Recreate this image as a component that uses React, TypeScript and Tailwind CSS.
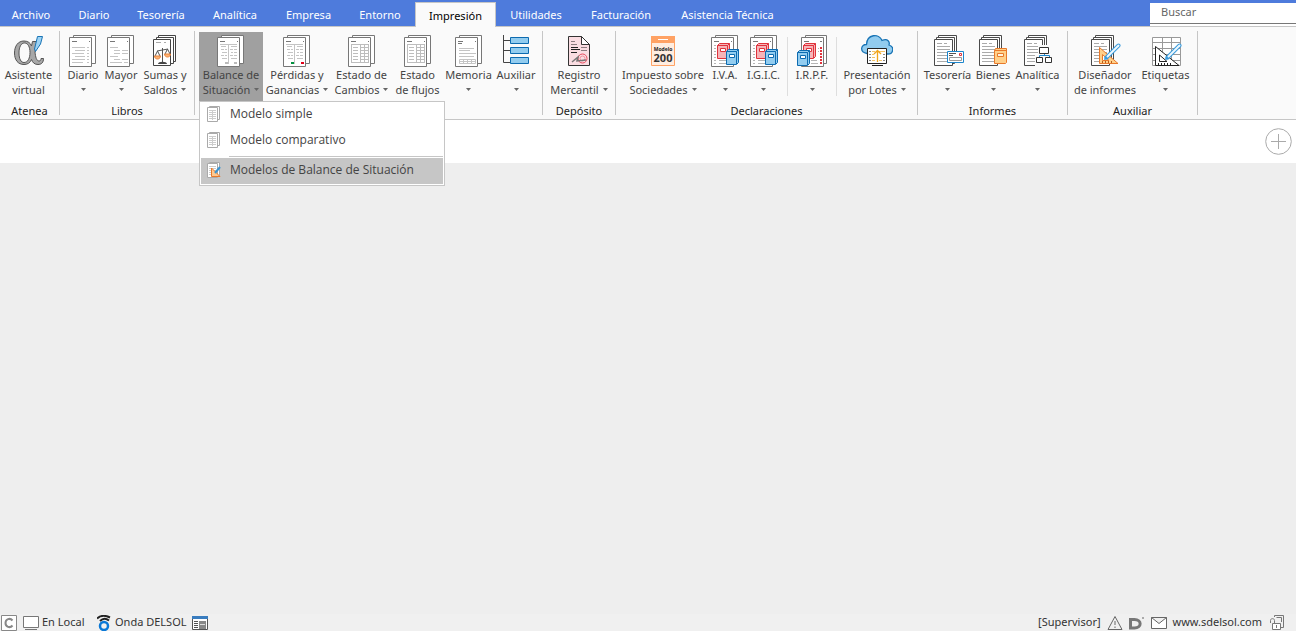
import type { ReactNode } from "react";

const tabs = [
  { label: "Diario", width: "w-[60px]" },
  { label: "Tesorería", width: "w-[74px]" },
  { label: "Analítica", width: "w-[74px]" },
  { label: "Empresa", width: "w-[73px]" },
  { label: "Entorno", width: "w-[70px]" },
  { label: "Impresión", width: "w-[81px]", active: true },
  { label: "Utilidades", width: "w-[80px]" },
  { label: "Facturación", width: "w-[90px]" },
  { label: "Asistencia Técnica", width: "w-[123px]" },
];

/* ---------- icons ---------- */

const Icon = ({ children }: { children: ReactNode }) => (
  <svg width="32" height="33" viewBox="0 0 32 33" fill="none" className="shrink-0" aria-hidden="true">
    {children}
  </svg>
);

// two stacked sheets
const Sheets = ({ children }: { children?: ReactNode }) => (
  <g transform="translate(-1 0)">
    <path d="M7.5 1.5H29.5V29.5H7.5Z" fill="#fff" stroke="#777" />
    <path d="M3.5 3.5H25.5V32.5H3.5Z" fill="#fff" stroke="#777" />
    <path d="M6 7.5H11M23 7.5H24" stroke="#777" />
    {children}
  </g>
);

// three stacked sheets, darker
const DarkSheets = () => (
  <>
    <path d="M6.5 1.5H24.5V27.5H6.5Z" fill="#fff" stroke="#4a4a4a" />
    <path d="M4.5 3.5H22.5V29.5H4.5Z" fill="#fff" stroke="#4a4a4a" />
    <path d="M2.5 5.5H20.5V31.5H2.5Z" fill="#fff" stroke="#4a4a4a" />
    <path d="M5 9.5H10M12 9.5H15" stroke="#aaa" />
    <path d="M5 12.5H18M5 15.5H18M5 18.5H18M5 21.5H18M5 24.5H18M5 27.5H18" stroke="#aaa" />
  </>
);

const AlphaIcon = () => (
  <Icon>
    <path
      fillRule="evenodd"
      d="M11 7C15 7 17.500 9 18.500 12L19.500 7.500H24.500L22 18C22.500 23 23.500 27 26 27C27.500 27 28 26 28 24.500H30.500C30.500 28.500 28.500 30.500 25 30.500C21.500 30.500 19.500 28.500 18.500 25.500C17 29 14.500 30.500 11 30.500C5 30.500 1.500 26 1.500 19C1.500 12 5 7 11 7ZM11.500 9C8 9 6 13 6 19C6 25 8 28.500 11 28.500C15 28.500 17 24 17 18.500C17 13 15 9 11.500 9Z"
      fill="#a8a8a8"
      stroke="#555"
    />
    <path d="M24.500 2.500H29.500L27.500 10L22.500 17.500L21.500 15Z" fill="#9dd3f4" stroke="#1974b5" />
  </Icon>
);

const DiarioIcon = () => (
  <Icon>
    <Sheets>
      <path d="M6 13.5H19M21 13.5H23M9 16.5H19M21 16.5H23M6 19.5H18M21 19.5H23M9 22.5H19M21 22.5H23M6 25.5H19M21 25.5H23M6 28.5H17M21 28.5H23" stroke="#c4c4c4" />
    </Sheets>
  </Icon>
);

const MayorIcon = () => (
  <Icon>
    <Sheets>
      <path d="M6 13.5H14M10 16.5H16M18 16.5H24M10 19.5H16M18 19.5H24M6 22.5H14M10 25.5H16M18 25.5H24M6 28.5H18M20 28.5H24" stroke="#c4c4c4" />
    </Sheets>
  </Icon>
);

const SumasIcon = () => (
  <Icon>
    <g transform="translate(-1 0)">
      <path d="M10.5 1.5H27.5V27.5H10.5Z" fill="#fff" stroke="#444" />
      <path d="M8.5 3.5H25.5V29.5H8.5Z" fill="#fff" stroke="#444" />
      <path d="M5.5 5.5H22.5V31.5H5.5Z" fill="#fff" stroke="#444" />
      <path d="M8 8.5H13M16 8.5H18" stroke="#aaa" />
      <path d="M14.5 14V28M9 17L20 15M9.5 17L7 22M9.500 17L12 22M19.500 15L17 20M19.500 15L22 20" stroke="#555" />
      <path d="M10 30C10 27 19 27 19 30Z" fill="#444" />
      <path d="M6.500 22H12.500C12.500 26 6.500 26 6.500 22ZM16.500 20H22.500C22.500 24 16.500 24 16.500 20Z" fill="#ffb273" stroke="#e8833a" />
    </g>
  </Icon>
);

const balanceLines =
  "M14.5 10V30M7 12.5H12M17 12.5H23M7 15.5H10M11 15.5H13M16 15.5H19M20 15.5H23M8 18.5H13M17 18.5H19M20 18.5H23M7 21.5H10M11 21.5H13M16 21.5H19M20 21.5H23M8 24.5H13M17 24.5H23M6 10.5H23";

const BalanceIcon = () => (
  <Icon>
    <Sheets>
      <path d={balanceLines} stroke="#c4c4c4" />
      <path d="M11 29H14M20 29H23" stroke="#bbb" strokeWidth="2" />
    </Sheets>
  </Icon>
);

const PerdidasIcon = () => (
  <Icon>
    <Sheets>
      <path d={balanceLines} stroke="#c4c4c4" />
      <path d="M11 29H14" stroke="#00923f" strokeWidth="2" />
      <path d="M21 29H24" stroke="#e2001a" strokeWidth="2" />
    </Sheets>
  </Icon>
);

const CambiosIcon = () => (
  <Icon>
    <Sheets>
      <path d="M6.5 10.5H24M6.5 28.5H24M6.5 10V29M15.5 10V29M19.5 10V29M23.5 10V29M8 13.5H13M15 13.5H24M8 16.5H13M15 16.5H24M8 19.5H13M15 19.5H24M8 22.5H13M15 22.5H24M8 25.5H13M15 25.5H24" stroke="#bdbdbd" />
    </Sheets>
  </Icon>
);

const MemoriaIcon = () => (
  <Icon>
    <Sheets>
      <path d="M6 9.5H10" stroke="#777" />
      <path d="M7 14.5H22M7 16.5H18M7 19.5H24M7 22.5H22M7.5 25.5H23.5V29.5H7.5ZM11.5 25V30M15.5 25V30M19.5 25V30M7 27.5H24" stroke="#c4c4c4" />
    </Sheets>
  </Icon>
);

const AuxiliarIcon = () => (
  <Icon>
    <path d="M3.5 1V28.5H10M3.5 6.5H10M3.5 16.5H10" stroke="#444" />
    <path d="M10.5 3.5H28.5V9.5H10.5ZM10.5 13.5H28.5V19.5H10.5ZM10.5 23.5H28.5V29.5H10.5Z" fill="#92ccef" stroke="#0d6bb0" />
  </Icon>
);

const RegistroIcon = () => (
  <Icon>
    <path d="M5.5 2.5H18.5L26.5 10.5V31.5H5.5Z" fill="#fadde2" stroke="#333" />
    <path d="M18.5 2.5V10.5H26.5Z" fill="#fff" stroke="#333" />
    <path d="M8 7.5H12M8 10.5H14M18 13.5H24M18 16.5H24" stroke="#8c7b7f" />
    <path d="M8 13.5H15M8 15.5H17M8 18.5H14" stroke="#222" />
    <circle cx="19.5" cy="24.5" r="4.5" stroke="#e8495c" />
    <circle cx="19.5" cy="24.5" r="2.5" stroke="#f2929d" />
    <path d="M9 28L15 23L14 27L23 26" stroke="#777" strokeWidth="1.500" />
  </Icon>
);

const ModeloIcon = () => (
  <Icon>
    <path d="M4.5 2.5H27.5V31.5H4.5Z" fill="#ffede0" stroke="#ffa264" />
    <path d="M4 2H28V9H4Z" fill="#ffa264" />
    <path d="M11 5.5H21" stroke="#fff" />
    <text x="16" y="17" textAnchor="middle" fontSize="5" fontWeight="700" fill="#222" fontFamily="Open Sans, sans-serif">Modelo</text>
    <text x="16" y="28" textAnchor="middle" fontSize="11" fontWeight="700" fill="#333" fontFamily="Open Sans, sans-serif">200</text>
  </Icon>
);

const Binder = ({ x, y, blue }: { x: number; y: number; blue?: boolean }) => (
  <g transform={`translate(${x} ${y})`} stroke={blue ? "#0d6bb0" : "#e0333c"}>
    <path d="M0.500 2.500L2.500 0.500H12.500V13.500L10.500 15.500H0.500Z" fill={blue ? "#92ccef" : "#f6b4b8"} />
    <path d="M0.500 2.500H10.500V15M10.500 2.500L12.500 0.500" />
    <path d="M3.500 5.500H8.500V8.500H3.500Z" fill="#fff" />
  </g>
);

const IvaIcon = () => (
  <Icon>
    <Sheets>
      <path d="M6 11.5H8M6 14.5H8M6 17.5H8M6 20.5H8M6 23.5H8M6 26.5H8M6 29.5H8M11 26.5H18M11 29.5H20" stroke="#b5b5b5" />
    </Sheets>
    <Binder x={8} y={9} />
    <Binder x={17} y={15} blue />
  </Icon>
);

const IrpfIcon = () => (
  <Icon>
    <path d="M9.500 1.500H30.500V29.500H9.500Z" fill="#fff" stroke="#777" />
    <path d="M5.500 3.500H27.500V32.500H5.500Z" fill="#fff" stroke="#777" />
    <path d="M8 7.5H13M24 7.5H26" stroke="#777" />
    <path d="M15 29.5H22M15 26.5H21M8 11.5H10M22 14.5H23M22 17.5H23" stroke="#b5b5b5" />
    <path d="M25 13V31" stroke="#e0333c" strokeWidth="2" strokeDasharray="2 1" />
    <Binder x={7} y={9} />
    <Binder x={1} y={16} blue />
  </Icon>
);

const LotesIcon = () => (
  <Icon>
    <path d="M6 19.5C-2 18 0 10 5.500 10.500C6 0 18 -1 21 6.500C27 4 29 8 28 11C34 13 32 20 27 20Z" fill="#92ccef" stroke="#1974b5" strokeWidth="1.300" />
    <path d="M6.500 14.500H25.500V29.500H6.500Z" fill="#fff" stroke="#222" />
    <path d="M11 31.500H22" stroke="#222" />
    <path d="M8 17.500H10M8 20.500H10M8 23.500H10M8 26.500H10M22 20.500H24M22 23.500H24M22 26.500H24" stroke="#888" />
    <path d="M11 17.5H14M18 17.5H24M11 20.5H13M11 23.5H14M11 26.5H14M18 26.5H21" stroke="#f4c469" />
    <path d="M16.500 28V17M13 20L16.500 16.500L20 20" stroke="#f0a51e" strokeWidth="1.300" />
  </Icon>
);

const TesoreriaIcon = () => (
  <Icon>
    <DarkSheets />
    <path d="M15.500 17.500H31.500V28.500H15.500Z" fill="#fff" stroke="#1c86cc" />
    <path d="M17 19.500H24M17 21.500H21" stroke="#555" />
    <path d="M17.500 23.500H29.500V26.500H17.500Z" stroke="#999" />
    <path d="M27.500 19.500H29.500V21.500H27.500Z" stroke="#e0333c" />
  </Icon>
);

const BienesIcon = () => (
  <Icon>
    <DarkSheets />
    <path d="M17.500 16.500L18.500 14.500H29.500V28.500L28.500 29.500H17.500Z" fill="#ffd08a" stroke="#e8792a" />
    <path d="M17.500 16.500H29" stroke="#e8792a" />
    <path d="M20.500 19.500H26.500V22.500H20.500Z" fill="#fff3dd" stroke="#e8792a" />
  </Icon>
);

const AnaliticaIcon = () => (
  <Icon>
    <DarkSheets />
    <path d="M16 11H28V20H32V32H13V21H16Z" fill="#fafafa" />
    <path d="M22.500 19V22M17.500 23V21.500H27.500V23" stroke="#1c86cc" />
    <path d="M17.500 13.500H26.500V19.500H17.500ZM14.500 23.500H20.500V28.500H14.500ZM23.500 23.500H29.500V28.500H23.500Z" fill="#fff" stroke="#333" />
  </Icon>
);

const Pen = () => (
  <>
    <path d="M17.500 23.500L29.500 11.500" stroke="#3a9bdc" strokeWidth="4" strokeLinecap="round" />
    <path d="M18.500 22.500L29.500 11.500" stroke="#eef8fe" strokeWidth="2" strokeLinecap="round" />
    <path d="M15 26L16 22L19 25Z" fill="#3a9bdc" />
  </>
);

const DisenadorIcon = () => (
  <Icon>
    <DarkSheets />
    <path d="M10.500 13.500V29.500H29Z" fill="#ffd08a" stroke="#e8792a" />
    <path d="M13.500 20.500V26.500H20Z" fill="#fff" stroke="#e8792a" />
    <path d="M13.500 27V29M16.500 27V29M19.500 27V29M22.500 27V29" stroke="#b85c1c" />
    <Pen />
  </Icon>
);

const EtiquetasIcon = () => (
  <Icon>
    <path d="M2.500 3.500H30.500V31.500H2.500ZM12.500 3V31M21.500 3V31M2 8.500H31M2 14.500H31M2 20.500H31M2 26.500H31" fill="#fff" stroke="#999" />
    <path d="M5.500 12.500V31.500H29Z" fill="#fff" stroke="#222" />
    <path d="M9.500 21V27.500H17Z" fill="#fff" stroke="#222" />
    <path d="M8.500 29V31M11.500 29V31M14.500 29V31M17.500 29V31M20.500 29V31" stroke="#222" />
    <Pen />
  </Icon>
);

const Caret = () => (
  <svg width="5" height="3" viewBox="0 0 5 3" aria-hidden="true">
    <path d="M0 0H5L2.500 3Z" fill="#666" />
  </svg>
);

/* ---------- ribbon ---------- */

interface RibbonButtonProps {
  icon: ReactNode;
  line1: string;
  line2?: string;
  caret?: boolean;
  width: string;
  active?: boolean;
}

const RibbonButton = ({ icon, line1, line2, caret, width, active }: RibbonButtonProps) => (
  <button
    className={`flex flex-col items-center h-[69px] pt-[2px] shrink-0 whitespace-nowrap text-[#444] ${width} ${
      active ? "bg-[#a0a0a0]" : "hover:bg-[#e5e5e5]"
    }`}
  >
    {icon}
    <span className="leading-[15px]">{line1}</span>
    <span className="flex items-center gap-1 h-[15px] leading-[15px]">
      {line2}
      {caret && <Caret />}
    </span>
  </button>
);

const Group = ({ title, width, children }: { title?: string; width: string; children: ReactNode }) => (
  <section className={`flex flex-col shrink-0 h-[84px] px-1 border-r border-[#c6c6c6] ${width}`} aria-label={title}>
    <div className="flex pt-px">{children}</div>
    {title && <h2 className="mt-[3px] text-center leading-[13px] text-[#222]">{title}</h2>}
  </section>
);

const Divider = () => <div className="w-px h-[59px] mx-1 mt-[5px] bg-[#dedede] shrink-0" />;

/* ---------- dropdown ---------- */

const SmallSheet = ({ design }: { design?: boolean }) => (
  <svg width="16" height="16" viewBox="0 0 16 16" fill="none" aria-hidden="true">
    <path d="M3.500 0.500H13.500V13.500H3.500Z" fill="#fff" stroke="#aaa" />
    <path d="M1.500 1.500H11.500V15.500H1.500Z" fill="#fff" stroke="#aaa" />
    <path d="M3 4.500H10M3 6.500H10M3 8.500H10M3 10.500H10M3 12.500H10" stroke="#ccc" />
    {design ? (
      <>
        <path d="M5.500 6V14.500H14Z" fill="#ffc98f" stroke="#e8792a" />
        <path d="M9 11L14 5" stroke="#3a94d0" strokeWidth="2" />
      </>
    ) : (
      <path d="M6.500 4V14" stroke="#ccc" />
    )}
  </svg>
);

const MenuItem = ({ label, design, selected }: { label: string; design?: boolean; selected?: boolean }) => (
  <button
    role="menuitem"
    className={`flex items-center w-full h-[26px] gap-2 pl-[5px] pb-[3px] text-left whitespace-nowrap text-[#444] ${
      selected ? "bg-[#c6c6c6]" : "hover:bg-[#eee]"
    }`}
  >
    <SmallSheet design={design} />
    {label}
  </button>
);

const BalanceMenu = () => (
  <div
    role="menu"
    className="absolute left-0 top-full z-10 w-[246px] p-px pt-0 bg-white border border-[#c6c6c6] text-[12px] font-['Open_Sans','Noto_Sans',sans-serif]"
  >
    <MenuItem label="Modelo simple" />
    <MenuItem label="Modelo comparativo" />
    <div className="ml-7 mt-[2px] mb-px h-px bg-[#c6c6c6]" />
    <MenuItem label="Modelos de Balance de Situación" design selected />
  </div>
);

const Ribbon = () => (
  <div className="flex h-[94px] pt-1 bg-[#fafafa] border-y border-[#c6c6c6]">
    <Group title="Atenea" width="w-[60px]">
      <RibbonButton icon={<AlphaIcon />} line1="Asistente" line2="virtual" width="w-[49px]" />
    </Group>
    <Group title="Libros" width="w-[135px]">
      <RibbonButton icon={<DiarioIcon />} line1="Diario" caret width="w-[38px]" />
      <RibbonButton icon={<MayorIcon />} line1="Mayor" caret width="w-[38px]" />
      <RibbonButton icon={<SumasIcon />} line1="Sumas y" line2="Saldos" caret width="w-[50px]" />
    </Group>
    <Group width="w-[348px]">
      <div className="relative">
        <RibbonButton icon={<BalanceIcon />} line1="Balance de" line2="Situación" caret active width="w-[64px]" />
        <BalanceMenu />
      </div>
      <RibbonButton icon={<PerdidasIcon />} line1="Pérdidas y" line2="Ganancias" caret width="w-[68px]" />
      <RibbonButton icon={<CambiosIcon />} line1="Estado de" line2="Cambios" caret width="w-[61px]" />
      <RibbonButton icon={<CambiosIcon />} line1="Estado" line2="de flujos" width="w-[51px]" />
      <RibbonButton icon={<MemoriaIcon />} line1="Memoria" caret width="w-[51px]" />
      <RibbonButton icon={<AuxiliarIcon />} line1="Auxiliar" caret width="w-[44px]" />
    </Group>
    <Group title="Depósito" width="w-[73px]">
      <RibbonButton icon={<RegistroIcon />} line1="Registro" line2="Mercantil" caret width="w-[64px]" />
    </Group>
    <Group title="Declaraciones" width="w-[302px]">
      <RibbonButton icon={<ModeloIcon />} line1="Impuesto sobre" line2="Sociedades" caret width="w-[86px]" />
      <RibbonButton icon={<IvaIcon />} line1="I.V.A." caret width="w-[38px]" />
      <RibbonButton icon={<IvaIcon />} line1="I.G.I.C." caret width="w-[39px]" />
      <Divider />
      <RibbonButton icon={<IrpfIcon />} line1="I.R.P.F." caret width="w-[40px]" />
      <Divider />
      <RibbonButton icon={<LotesIcon />} line1="Presentación" line2="por Lotes" caret width="w-[72px]" />
    </Group>
    <Group title="Informes" width="w-[150px]">
      <RibbonButton icon={<TesoreriaIcon />} line1="Tesorería" caret width="w-[51px]" />
      <RibbonButton icon={<BienesIcon />} line1="Bienes" caret width="w-[40px]" />
      <RibbonButton icon={<AnaliticaIcon />} line1="Analítica" caret width="w-[49px]" />
    </Group>
    <Group title="Auxiliar" width="w-[130px]">
      <RibbonButton icon={<DisenadorIcon />} line1="Diseñador" line2="de informes" width="w-[66px]" />
      <RibbonButton icon={<EtiquetasIcon />} line1="Etiquetas" caret width="w-[55px]" />
    </Group>
  </div>
);

const Tabs = () => (
  <header className="flex h-[26px] bg-[#4e7bdc] text-white">
    <nav className="flex items-end">
      <button className="w-[62px] h-[24px] mr-[2px] pt-[2px]">Archivo</button>
      {tabs.map((tab) => (
        <button
          key={tab.label}
          className={`pt-[2px] whitespace-nowrap ${tab.width} ${
            tab.active ? "relative h-[25px] -mb-px bg-[#fafafa] text-black border border-b-0 border-[#c6c6c6]" : "h-[24px]"
          }`}
        >
          {tab.label}
        </button>
      ))}
    </nav>
    <div className="ml-auto pt-[3px] w-[146px]">
      <div className="h-full bg-white">
        <input
          aria-label="Buscar"
          placeholder="Buscar"
          className="block w-full h-[21px] pl-[11px] pb-[3px] border-b border-[#777] outline-none placeholder:text-[#666]"
        />
      </div>
    </div>
  </header>
);

const StatusBar = () => (
  <footer className="flex items-center h-[17px] pr-[10px] bg-[#f0f0f0] text-[#333]">
    <svg width="17" height="16" viewBox="0 0 17 16" fill="none" aria-hidden="true">
      <path d="M1.500 0.500H16.500V15.500H1.500Z" fill="#fff" stroke="#888" />
      <path d="M12.500 5.500C10 2.500 5.500 4 5.500 8C5.500 12 10 13.500 12.500 10.500" stroke="#888" strokeWidth="2" />
    </svg>
    <svg width="17" height="16" viewBox="0 0 17 16" fill="none" className="ml-[6px]" aria-hidden="true">
      <path d="M0.500 1.500H15.500V12.500H0.500Z" fill="#fff" stroke="#777" />
      <path d="M2 14.500H14" stroke="#777" />
    </svg>
    <span className="ml-[2px] w-[55px] whitespace-nowrap">En Local</span>
    <svg width="16" height="16" viewBox="0 0 16 16" fill="none" aria-hidden="true">
      <path d="M0 3.500C4 0 8 0 13 2.500M3 6C6 3 9 3 12 5.500" stroke="#222" strokeWidth="2" />
      <circle cx="7" cy="11" r="4" stroke="#0a78d6" strokeWidth="2.500" />
    </svg>
    <span className="ml-[2px] w-[77px] whitespace-nowrap">Onda DELSOL</span>
    <svg width="17" height="16" viewBox="0 0 17 16" fill="none" aria-hidden="true">
      <path d="M0.500 1.500H15.500V14.500H0.500Z" fill="#fff" stroke="#555" />
      <path d="M0 1H16V4H0Z" fill="#3a7dbf" />
      <path d="M2 6.500H6M2 8.500H6M2 10.500H6M2 12.500H6" stroke="#555" />
      <path d="M7 6H14V14H7Z" fill="#888" />
      <path d="M8 9.500H13" stroke="#ddd" />
    </svg>
    <span className="ml-auto">[Supervisor]</span>
    <svg width="16" height="16" viewBox="0 0 16 16" fill="none" className="ml-[6px]" aria-hidden="true">
      <path d="M8 1.500L15 14.500H1ZM8 6V10M8 11.500V13" stroke="#666" />
    </svg>
    <svg width="17" height="14" viewBox="0 0 17 14" fill="none" className="ml-[5px]" aria-hidden="true">
      <path d="M2.500 3.500H6.500C14 3.500 14 12 6.500 12H2.500Z" stroke="#777" strokeWidth="3" />
      <path d="M14 1H16V3H14Z" fill="#aaa" />
    </svg>
    <svg width="17" height="14" viewBox="0 0 17 14" fill="none" className="ml-[6px]" aria-hidden="true">
      <path d="M0.500 1.500H15.500V12.500H0.500ZM0.500 1.500L8 7.500L15.500 1.500" fill="#fff" stroke="#666" />
    </svg>
    <a href="#" className="ml-[5px]">www.sdelsol.com</a>
    <svg width="17" height="17" viewBox="0 0 17 17" fill="none" className="ml-[7px]" aria-hidden="true">
      <path d="M5.500 3V1.500H14.500V13.500H12M7.500 3.500H12.500V8" stroke="#777" />
      <path d="M1.500 9V6.500C1.500 4 5.500 4 5.500 6.500V9.500" stroke="#777" />
      <path d="M3.500 9.500H11.500V15.500H3.500Z" fill="#fff" stroke="#777" />
      <path d="M7.500 11V14" stroke="#777" />
    </svg>
  </footer>
);

export default function App() {
  return (
    <div className="flex flex-col min-h-screen overflow-x-hidden bg-[#eee] text-[11px] font-['Noto_Sans','Open_Sans',sans-serif]">
      <Tabs />
      <Ribbon />
      <div className="flex items-center justify-end h-[43px] pr-[4px] bg-white">
        <button aria-label="Nueva pestaña">
          <svg width="27" height="27" viewBox="0 0 27 27" fill="none" aria-hidden="true">
            <circle cx="13.500" cy="13.500" r="12.800" stroke="#aaa" />
            <path d="M6 13.500H21M13.500 6V21" stroke="#aaa" />
          </svg>
        </button>
      </div>
      <main className="grow" />
      <StatusBar />
    </div>
  );
}
